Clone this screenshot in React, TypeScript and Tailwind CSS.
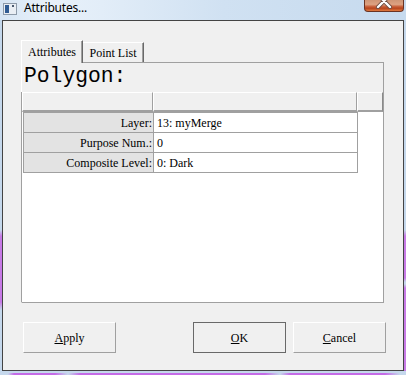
export default function App() {
  return (
    <div className="w-[406px] h-[375px] flex flex-col overflow-hidden bg-[#c5d8ec] font-['Liberation_Serif',serif] text-[12px] leading-[14px] text-black">
      {/* title bar */}
      <div className="h-[20px] flex items-start pl-[3px] bg-[linear-gradient(to_right,#d6e5f4_0%,#e8f1fa_12%,#e2edf8_25%,#d0e1f2_55%,#c6daee_100%)]">
        <svg width="14" height="12" viewBox="0 0 14 12" className="mt-[3px] shrink-0">
          <rect x="0" y="0" width="14" height="12" fill="#8d9aa9" />
          <rect x="1" y="1" width="12" height="10" fill="#e9eef4" />
          <rect x="2" y="2" width="4" height="8" fill="#2f5b93" />
          <rect x="9" y="2" width="2" height="2" fill="#4a5a70" />
        </svg>
        <span className="ml-[7px] font-['Noto_Sans',sans-serif] text-[12px] leading-[16px] tracking-[-0.2px] text-black">
          Attributes...
        </span>
        <div className="ml-auto mr-[2px] w-[40px] h-[12px] rounded-b-[4px] border border-t-0 border-[#6b3322] bg-[linear-gradient(to_bottom,#cf9575_0%,#dda282_40%,#c8603a_60%,#b8461e_75%,#e07a40_100%)] flex justify-center overflow-hidden">
          <svg width="20" height="11" viewBox="0 0 20 11">
            <path d="M4 -5 L16 7 M16 -5 L4 7" stroke="#6a4a40" strokeWidth="4" strokeLinecap="round" />
            <path d="M4 -5 L16 7 M16 -5 L4 7" stroke="#ffffff" strokeWidth="2.4" strokeLinecap="round" />
          </svg>
        </div>
      </div>

      {/* middle */}
      <div className="flex h-[351px]">
        <div className="w-[2px] bg-[linear-gradient(to_bottom,#c5d8ec_0px,#c5d8ec_210px,#c77ae6_216px,#c77ae6_282px,#c5d8ec_290px)]" />
        <div className="w-[402px] h-[351px] border border-[#444444] bg-[#f0f0f0] flex flex-col pt-[19px]">
          {/* tabs */}
          <div className="ml-[18px] h-[22px] flex items-end">
            <div className="relative z-10 w-[62px] h-[23px] -mb-px bg-[#f0f0f0] border-l border-t border-white border-r border-r-[#696969] shadow-[inset_-1px_0_0_#a0a0a0] pt-[4px] text-center">
              Attributes
            </div>
            <div className="w-[61px] h-[20px] bg-[#f0f0f0] border-t border-white border-r border-r-[#696969] shadow-[inset_-1px_0_0_#a0a0a0] pt-[3px] text-center">
              Point List
            </div>
          </div>

          {/* panel */}
          <div className="ml-[18px] w-[363px] h-[241px] flex flex-col border border-[#a0a0a0] border-l-white">
            <div className="h-[29px] pl-[2px] pt-[2px] font-['Liberation_Mono',monospace] text-[21.33px] leading-[22px]">
              Polygon:
            </div>
            <div className="flex-1 -ml-px bg-white border-l border-[#a0a0a0] flex flex-col">
              <div className="flex h-[20px]">
                <div className="w-[131px] h-[20px] bg-[#f0f0f0] border-t border-l border-white border-r border-r-[#a0a0a0] border-b-2 border-b-[#a0a0a0]" />
                <div className="w-[204px] h-[20px] bg-[#f0f0f0] border-t border-l border-white border-r border-r-[#a0a0a0] border-b-2 border-b-[#a0a0a0]" />
                <div className="w-[26px] h-[20px] bg-[#f0f0f0] border-t border-l border-white border-r border-r-[#8a8a8a] border-b-2 border-b-[#a0a0a0]" />
              </div>
              <div className="ml-px w-[335px] border-l border-t border-[#a0a0a0] flex flex-col">
                {[
                  ["Layer:", "13: myMerge"],
                  ["Purpose Num.:", "0"],
                  ["Composite Level:", "0: Dark"],
                ].map(([k, v]) => (
                  <div key={k} className="flex h-[20px] border-b border-[#a0a0a0]">
                    <div className="w-[130px] bg-[#e3e3e3] border-r border-[#a0a0a0] text-right pr-[1px] pt-[3px]">
                      {k}
                    </div>
                    <div className="w-[204px] bg-white border-r border-[#a0a0a0] pl-[3px] pt-[3px]">
                      {v}
                    </div>
                  </div>
                ))}
              </div>
            </div>
          </div>

          {/* buttons */}
          <div className="mt-[19px] ml-[20px] flex">
            <button className="w-[93px] h-[31px] bg-[#f0f0f0] border border-white border-r-[#a0a0a0] border-b-[#a0a0a0] flex items-center justify-center leading-[14px]">
              <span>
                <span className="underline">A</span>pply
              </span>
            </button>
            <button className="ml-[77px] w-[93px] h-[31px] bg-[#f0f0f0] border border-[#696969] flex items-center justify-center leading-[14px]">
              <span>
                <span className="underline">O</span>K
              </span>
            </button>
            <button className="ml-[7px] w-[93px] h-[31px] bg-[#f0f0f0] border border-white border-r-[#a0a0a0] border-b-[#a0a0a0] flex items-center justify-center leading-[14px]">
              <span>
                <span className="underline">C</span>ancel
              </span>
            </button>
          </div>
        </div>
        <div className="w-[2px] bg-[linear-gradient(to_bottom,#c5d8ec_0px,#c5d8ec_210px,#c77ae6_216px,#c77ae6_258px,#c5d8ec_262px,#c5d8ec_264px,#c77ae6_268px)]" />
      </div>

      {/* bottom */}
      <div className="h-[2px] bg-[#c5d8ec]" />
      <div className="h-[2px] bg-[linear-gradient(to_right,#c5d8ec_8px,#c46be6_14px,#c46be6_55px,#c5d8ec_68px,#c46be6_80px,#c46be6_265px,#c5d8ec_280px,#c46be6_290px,#c46be6_385px,#c5d8ec_400px)]" />
    </div>
  );
}
